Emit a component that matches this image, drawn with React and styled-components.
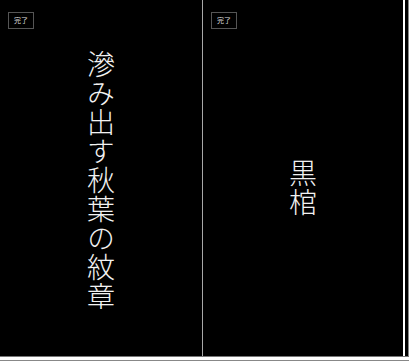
import React from "react";
import styled, { createGlobalStyle } from "styled-components";

const Global = createGlobalStyle`
  html, body { margin: 0; padding: 0; background: #fff; }
  body { font-family: "Noto Sans CJK JP", "Noto Sans", sans-serif; }
`;

const Page = styled.div`
  width: 409px;
  height: 361px;
  display: flex;
  flex-direction: column;
  background: #fff;
`;

const Row = styled.div`
  display: flex;
  height: 356px;
`;

const Viewer = styled.div`
  display: flex;
  width: 403px;
  background: #000;
`;

const Panel = styled.div`
  position: relative;
  width: ${(p) => p.$w}px;
  flex: none;
  display: flex;
  align-items: center;
  justify-content: center;
  border-right: ${(p) => (p.$divider ? "1px solid #a8a8a8" : "none")};
  box-sizing: border-box;
`;

const DoneButton = styled.button`
  position: absolute;
  top: 12px;
  left: 8px;
  width: 26px;
  height: 17px;
  padding: 0;
  background: #000;
  border: 1px solid #555;
  color: #ddd;
  font-family: "Noto Sans CJK JP", sans-serif;
  font-size: 7px;
  line-height: 15px;
  text-align: center;
`;

const VerticalTitle = styled.div`
  writing-mode: vertical-rl;
  color: #f2f2f2;
  font-family: "Noto Sans CJK JP", sans-serif;
  font-size: 28px;
  font-weight: 300;
  letter-spacing: 1px;
  line-height: 1;
  margin-top: ${(p) => p.$offset}px;
`;

const Strip = styled.div`
  width: ${(p) => p.$w}px;
  background: ${(p) => p.$c};
`;

const HLine = styled.div`
  height: ${(p) => p.$h}px;
  background: ${(p) => p.$c};
`;

export default function App() {
  return (
    <>
      <Global />
      <Page>
        <Row>
          <Viewer>
            <Panel $w={203} $divider>
              <DoneButton>完了</DoneButton>
              <VerticalTitle $offset={4}>滲み出す秋葉の紋章</VerticalTitle>
            </Panel>
            <Panel $w={200}>
              <DoneButton>完了</DoneButton>
              <VerticalTitle $offset={20}>黒棺</VerticalTitle>
            </Panel>
          </Viewer>
          <Strip $w={2} $c="#fff" />
          <Strip $w={3} $c="#000" />
          <Strip $w={1} $c="#888" />
        </Row>
        <HLine $h={1} $c="#777" />
        <HLine $h={3} $c="#fff" />
        <HLine $h={1} $c="#888" />
      </Page>
    </>
  );
}
